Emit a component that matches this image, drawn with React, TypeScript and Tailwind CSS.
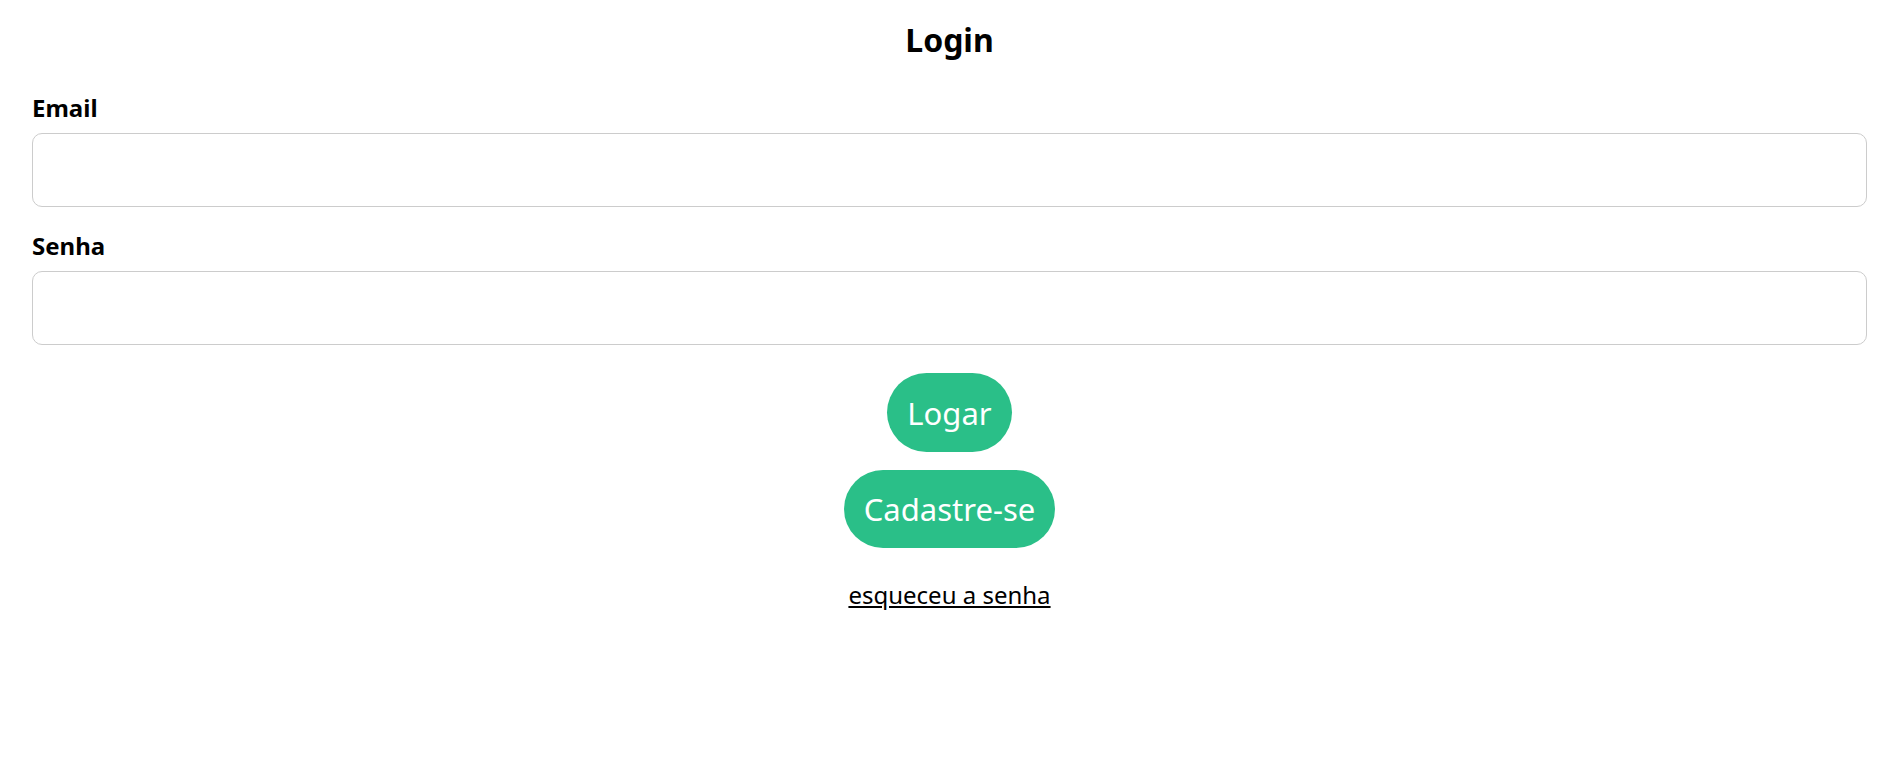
import React from "react";

export default function App() {
  return (
    <div
      className="min-h-screen bg-white text-black"
      style={{ fontFamily: '"Noto Sans", "Open Sans", sans-serif' }}
    >
      <div className="flex flex-col pl-8 pr-[37px]">
        <h1 className="mt-[20px] text-center text-[32px] font-bold leading-[40px]">Login</h1>
        <label className="mt-[32px] text-[24px] font-bold leading-[32px]">Email</label>
        <input
          type="email"
          className="mt-[9px] h-[74px] w-full rounded-[10px] border border-[#cccccc] px-3 outline-none"
        />
        <label className="mt-[23px] text-[24px] font-bold leading-[32px]">Senha</label>
        <input
          type="password"
          className="mt-[9px] h-[74px] w-full rounded-[10px] border border-[#cccccc] px-3 outline-none"
        />
        <div className="mt-[28px] flex flex-col items-center">
          <button className="h-[79px] rounded-full bg-[#2abf88] px-5 text-[31px] leading-[42px] text-white">
            Logar
          </button>
          <button className="mt-[18px] h-[78px] rounded-full bg-[#2abf88] px-5 text-[31px] leading-[42px] text-white">
            Cadastre-se
          </button>
          <a href="#" className="mt-[31px] text-[24px] leading-[32px] text-black underline">
            esqueceu a senha
          </a>
        </div>
      </div>
    </div>
  );
}
